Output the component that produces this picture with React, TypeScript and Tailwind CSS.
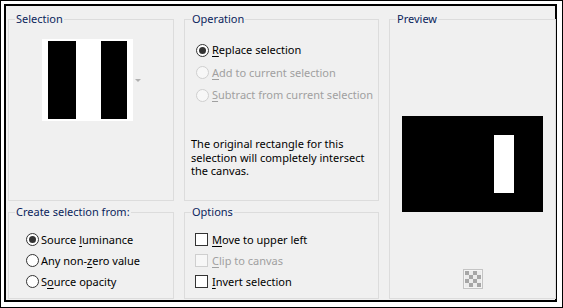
import type { ReactNode } from 'react'

const FONT = { fontFamily: '"Noto Sans", "Open Sans", sans-serif' }

// Windows style group box, label sits on the top edge
function Group({ title, className, children }: { title: string; className?: string; children?: ReactNode }) {
  return (
    <div className={`relative border border-[#dcdcdc] ${className ?? ''}`}>
      <span className="absolute left-[6px] top-[-9px] whitespace-nowrap bg-[#f0f0f0] px-[1px] text-[11px] leading-[16px] text-[#0b1f5c]">
        {title}
      </span>
      {children}
    </div>
  )
}

function Radio({ checked, disabled }: { checked?: boolean; disabled?: boolean }) {
  return (
    <span
      className={`flex h-[13px] w-[13px] shrink-0 items-center justify-center rounded-full border ${
        disabled ? 'border-[#cfcfcf] bg-[#f7f7f7]' : 'border-[#333333] bg-white'
      }`}
    >
      {checked && <span className="h-[7px] w-[7px] rounded-full bg-[#333333]" />}
    </span>
  )
}

function Check({ disabled }: { disabled?: boolean }) {
  return (
    <span
      className={`h-[13px] w-[13px] shrink-0 border ${
        disabled ? 'border-[#cfcfcf] bg-[#f7f7f7]' : 'border-[#333333] bg-white'
      }`}
    />
  )
}

// text with the access key underlined
function Label({ before, ul, after, disabled }: { before?: string; ul: string; after: string; disabled?: boolean }) {
  return (
    <span className={`whitespace-nowrap text-[11px] leading-[16px] ${disabled ? 'text-[#a0a0a0]' : 'text-black'}`}>
      {before}
      <span className="underline underline-offset-2">{ul}</span>
      {after}
    </span>
  )
}

function Checker() {
  const cells = []
  for (let r = 0; r < 4; r++) {
    for (let c = 0; c < 4; c++) {
      cells.push(
        <rect key={`${r}-${c}`} x={2 + c * 4} y={2 + r * 4} width={4} height={4} fill={(r + c) % 2 === 0 ? '#a6a6a6' : '#ececec'} />
      )
    }
  }
  return (
    <svg width="20" height="20" viewBox="0 0 20 20">
      <rect x="0.5" y="0.5" width="19" height="19" fill="#f4f4f4" stroke="#c4c4c4" />
      {cells}
    </svg>
  )
}

export default function App() {
  return (
    <div className="h-[308px] w-[563px] border border-black bg-white pb-[5px] pl-[3px] pr-[5px] pt-[3px]" style={FONT}>
      <div className="h-full w-full border-2 border-black bg-[#f0f0f0] pl-[2px] pt-[13px]">
        <div className="grid grid-cols-[166px_195px_167px] grid-rows-[182px_87px] gap-x-[10px] gap-y-[11px]">
          {/* Selection */}
          <Group title="Selection" className="pl-[33px] pt-[19px]">
            <div className="flex items-start">
              <div className="flex h-[82px] w-[91px] items-center justify-center bg-white">
                <div className="flex h-[78px] w-[79px]">
                  <div className="w-[28px] bg-black" />
                  <div className="w-[25px] bg-white" />
                  <div className="w-[26px] bg-black" />
                </div>
              </div>
              <svg width="6" height="4" viewBox="0 0 6 4" className="ml-[2px] mt-[40px]">
                <path d="M0 0 H6 L3 3 Z" fill="#b0b0b0" />
              </svg>
            </div>
          </Group>

          {/* Operation */}
          <Group title="Operation" className="pl-[11px] pt-[19px]">
            <div className="flex flex-col">
              <div className="flex h-[22px] items-center gap-[3px]">
                <Radio checked />
                <Label ul="R" after="eplace selection" />
              </div>
              <div className="flex h-[23px] items-center gap-[3px]">
                <Radio disabled />
                <Label ul="A" after="dd to current selection" disabled />
              </div>
              <div className="flex h-[22px] items-center gap-[3px]">
                <Radio disabled />
                <Label ul="S" after="ubtract from current selection" disabled />
              </div>
            </div>
            <p className="-ml-[5px] mt-[31px] whitespace-nowrap text-[11px] leading-[13.5px] text-black">
              The original rectangle for this
              <br />
              selection will completely intersect
              <br />
              the canvas.
            </p>
          </Group>

          {/* Preview */}
          <Group title="Preview" className="row-span-2 flex flex-col items-center pt-[96px]">
            <div className="h-[96px] w-[141px] bg-black pl-[92px] pt-[19px]">
              <div className="h-[58px] w-[20px] bg-white" />
            </div>
            <div className="mt-[57px]">
              <Checker />
            </div>
          </Group>

          {/* Create selection from */}
          <Group title="Create selection from:" className="pl-[17px] pt-[16px]">
            <div className="flex flex-col">
              <div className="flex h-[21px] items-center gap-[2px]">
                <Radio checked />
                <Label before="Source " ul="l" after="uminance" />
              </div>
              <div className="flex h-[21px] items-center gap-[2px]">
                <Radio />
                <Label before="Any non-" ul="z" after="ero value" />
              </div>
              <div className="flex h-[21px] items-center gap-[2px]">
                <Radio />
                <Label before="S" ul="o" after="urce opacity" />
              </div>
            </div>
          </Group>

          {/* Options */}
          <Group title="Options" className="pl-[10px] pt-[16px]">
            <div className="flex flex-col">
              <div className="flex h-[21px] items-center gap-[4px]">
                <Check />
                <Label ul="M" after="ove to upper left" />
              </div>
              <div className="flex h-[21px] items-center gap-[4px]">
                <Check disabled />
                <Label ul="C" after="lip to canvas" disabled />
              </div>
              <div className="flex h-[21px] items-center gap-[4px]">
                <Check />
                <Label ul="I" after="nvert selection" />
              </div>
            </div>
          </Group>
        </div>
      </div>
    </div>
  )
}
